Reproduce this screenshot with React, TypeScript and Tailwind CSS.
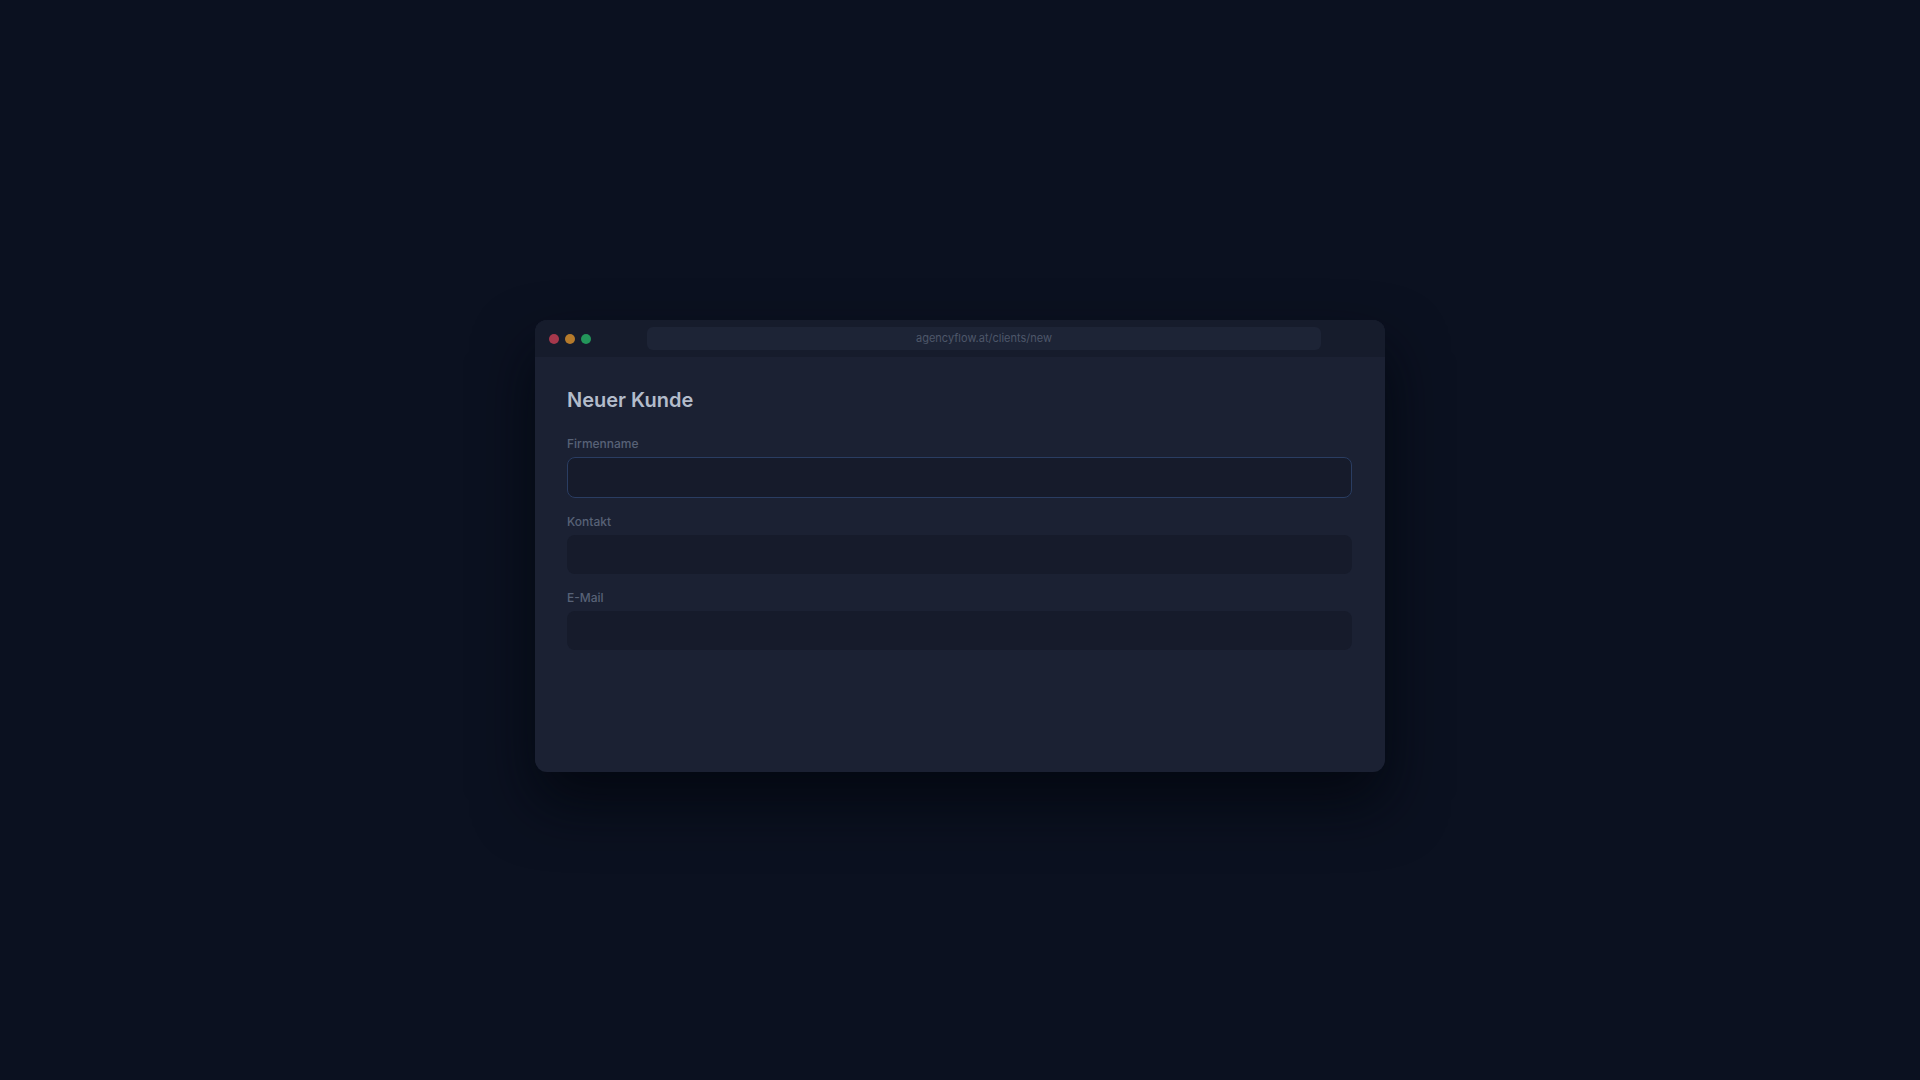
export default function App() {
    const fields = ['Firmenname', 'Kontakt', 'E-Mail'];

    return (
        <div className="min-h-screen w-full bg-[#0b1120] flex items-center justify-center font-['Inter','Liberation_Sans',sans-serif]">
            <div className="w-[850px] h-[452px] mt-[12px] rounded-xl bg-[#1b2133] overflow-hidden shadow-[0_30px_60px_rgba(3,6,14,0.8)] flex flex-col">
                <div className="h-[37px] bg-[#161c2c] flex items-center pl-[14px] pr-[64px] shrink-0">
                    <div className="flex gap-[6px]">
                        <span className="w-[10px] h-[10px] rounded-full bg-[#a6384c]"></span>
                        <span className="w-[10px] h-[10px] rounded-full bg-[#b57a2b]"></span>
                        <span className="w-[10px] h-[10px] rounded-full bg-[#23965a]"></span>
                    </div>
                    <div className="ml-[56px] flex-1 h-[23px] rounded-md bg-[#1d2436] flex items-center justify-center text-[11px] text-[#4e576a]">
                        agencyflow.at/clients/new
                    </div>
                </div>
                <div className="pl-[32px] pr-[33px] pt-[29px]">
                    <h1 className="text-[20px] leading-[28px] font-semibold text-[#b3bccb] mb-[22px]">Neuer Kunde</h1>
                    {fields.map((field, index) => (
                        <div key={field} className="mb-[16px]">
                            <label className="block text-[12px] leading-[16px] font-medium text-[#586277] mb-[5px]">{field}</label>
                            <input
                                type="text"
                                className={index === 0
                                    ? 'block w-full h-[41px] rounded-lg bg-[#161b2b] border border-[#2a3d62] outline-none'
                                    : 'block w-full h-[39px] rounded-lg bg-[#161b2b] border border-transparent outline-none'}
                            />
                        </div>
                    ))}
                </div>
            </div>
        </div>
    );
}
